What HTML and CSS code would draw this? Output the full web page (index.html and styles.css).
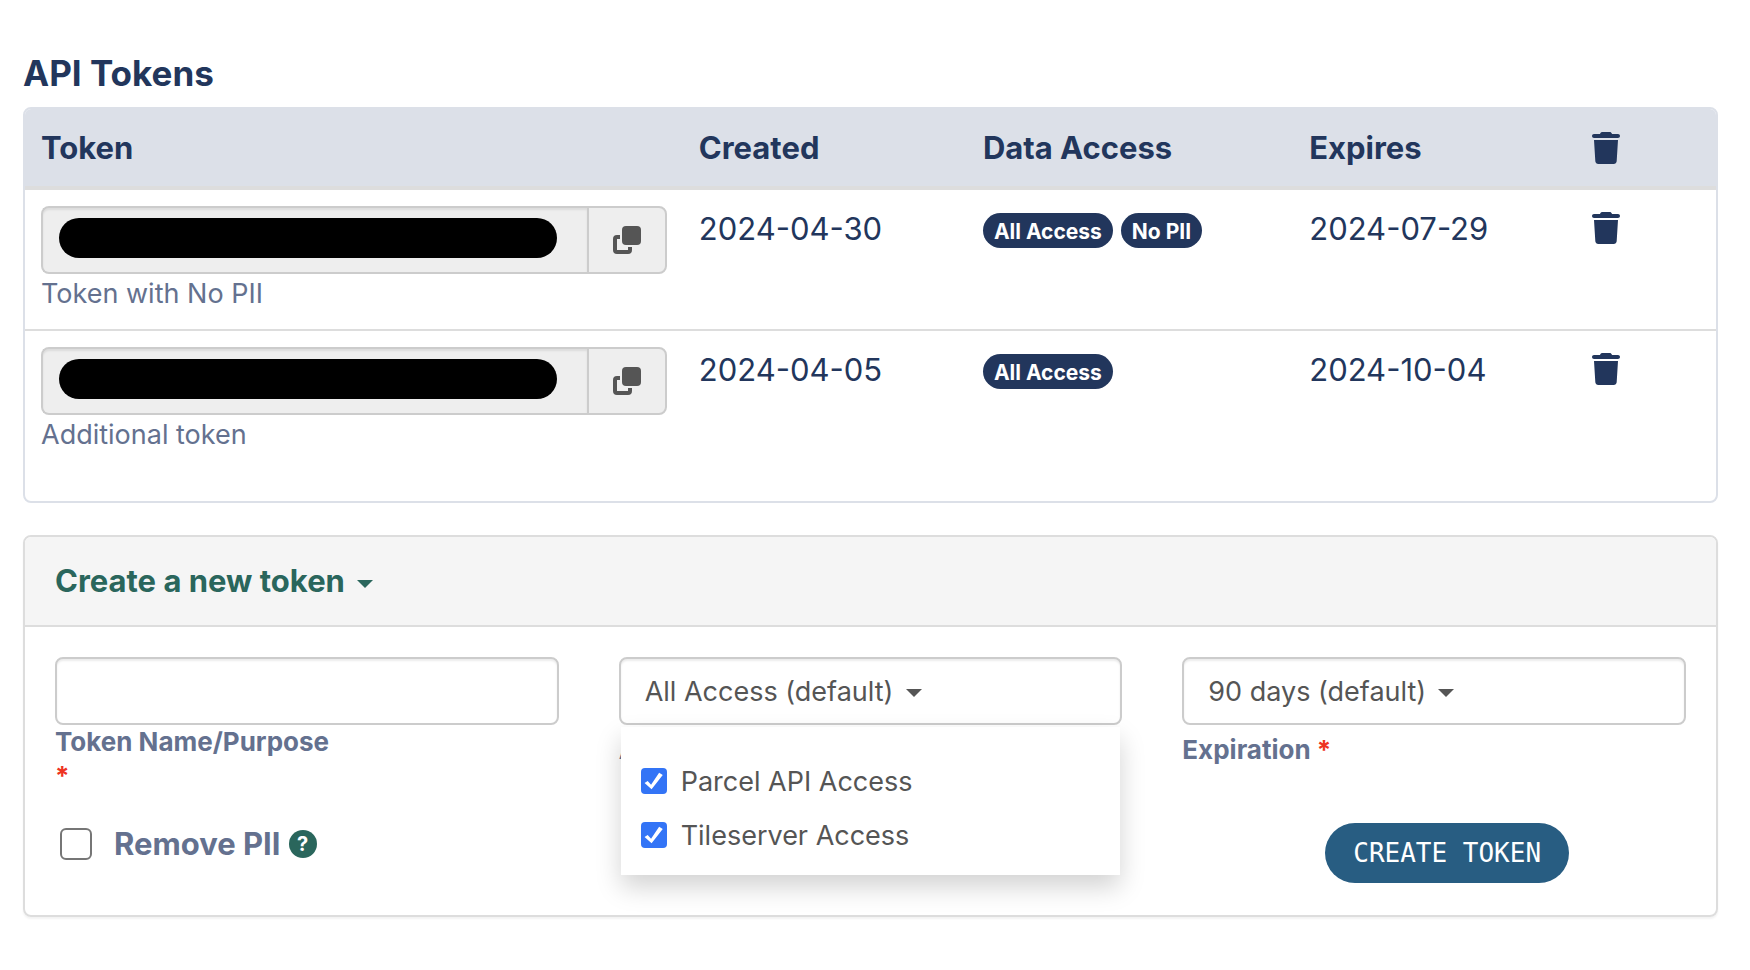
FILE: index.html
```
<!DOCTYPE html>
<html lang="en">
<head>
    <meta charset="UTF-8">
    <meta name="viewport" content="width=device-width, initial-scale=1.0">
    <title>API Tokens</title>
    <link rel="stylesheet" href="styles.css">
</head>
<body>
    <svg class="icon-defs" aria-hidden="true">
        <symbol id="icon-trash" viewBox="0 0 448 512">
            <path d="M135.200 17.700L128 32H32C14.300 32 0 46.300 0 64s14.300 32 32 32h384c17.700 0 32-14.300 32-32s-14.300-32-32-32h-96l-7.200-14.300C307.400 6.800 296.300 0 284.200 0H163.800c-12.100 0-23.200 6.800-28.600 17.700zM416 128H32l21.200 339c1.600 25.300 22.600 45 47.900 45h245.800c25.300 0 46.300-19.700 47.900-45z"/>
        </symbol>
        <symbol id="icon-copy" viewBox="0 0 28 28">
            <rect x="9" y="0" width="19" height="19" rx="4"/>
            <path d="M7 9H4a4 4 0 0 0-4 4v11a4 4 0 0 0 4 4h11a4 4 0 0 0 4-4v-3h-4v3H4V13h3z"/>
        </symbol>
    </svg>

    <h2 class="page-title">API Tokens</h2>

    <div class="token-panel">
        <table class="token-table">
            <thead>
                <tr>
                    <th class="col-token">Token</th>
                    <th class="col-created">Created</th>
                    <th class="col-access">Data Access</th>
                    <th class="col-expires">Expires</th>
                    <th class="col-delete"><svg class="trash" role="img" aria-label="Delete"><use href="#icon-trash"/></svg></th>
                </tr>
            </thead>
            <tbody>
                <tr>
                    <td>
                        <div class="input-group">
                            <input type="text" class="token-input" aria-label="Token with No PII" readonly>
                            <span class="redacted"></span>
                            <button type="button" class="copy-btn" aria-label="Copy token"><svg class="copy"><use href="#icon-copy"/></svg></button>
                        </div>
                        <div class="hint">Token with No PII</div>
                    </td>
                    <td>2024-04-30</td>
                    <td><div class="badges"><span class="badge">All Access</span><span class="badge">No PII</span></div></td>
                    <td>2024-07-29</td>
                    <td><button type="button" class="delete-btn" aria-label="Delete token"><svg class="trash"><use href="#icon-trash"/></svg></button></td>
                </tr>
                <tr>
                    <td>
                        <div class="input-group">
                            <input type="text" class="token-input" aria-label="Additional token" readonly>
                            <span class="redacted"></span>
                            <button type="button" class="copy-btn" aria-label="Copy token"><svg class="copy"><use href="#icon-copy"/></svg></button>
                        </div>
                        <div class="hint">Additional token</div>
                    </td>
                    <td>2024-04-05</td>
                    <td><div class="badges"><span class="badge">All Access</span></div></td>
                    <td>2024-10-04</td>
                    <td><button type="button" class="delete-btn" aria-label="Delete token"><svg class="trash"><use href="#icon-trash"/></svg></button></td>
                </tr>
            </tbody>
        </table>
    </div>

    <div class="panel">
        <div class="panel-heading">
            <a href="#new-token" class="panel-toggle">Create a new token <span class="caret"></span></a>
        </div>
        <form class="panel-body" id="new-token">
            <div class="form-row">
                <div class="form-col">
                    <input type="text" class="control" id="token-name">
                    <label class="field-label" for="token-name">Token Name/Purpose <span class="required required-block">*</span></label>
                </div>
                <div class="form-col dropdown">
                    <button type="button" class="control" id="access" aria-expanded="true">All Access (default) <span class="caret"></span></button>
                    <div class="dropdown-menu">
                        <label class="menu-item"><input type="checkbox" class="check" checked>Parcel API Access</label>
                        <label class="menu-item"><input type="checkbox" class="check" checked>Tileserver Access</label>
                    </div>
                    <label class="field-label label-spaced" for="access">Access</label>
                </div>
                <div class="form-col">
                    <select class="control control-select" id="expiration">
                        <option>90 days (default)</option>
                    </select>
                    <label class="field-label label-spaced" for="expiration">Expiration <span class="required">*</span></label>
                </div>
            </div>
            <div class="form-row">
                <div class="pii">
                    <input type="checkbox" class="pii-check" id="remove-pii">
                    <label for="remove-pii">Remove PII</label>
                    <span class="help">?</span>
                </div>
                <div></div>
                <div class="actions">
                    <button type="submit" class="btn-create">CREATE TOKEN</button>
                </div>
            </div>
        </form>
    </div>
</body>
</html>
```
FILE: styles.css
```
* {
    box-sizing: border-box;
}
body {
    font-family: Inter, "Liberation Sans", sans-serif;
    font-size: 31px;
    line-height: 45px;
    color: #22365c;
    background-color: #fff;
    margin: 0;
    padding: 49px 32px 48px 23px;
}
button, input, select {
    font-family: inherit;
    margin: 0;
}
.icon-defs {
    display: none;
}
.page-title {
    font-size: 35px;
    line-height: 48px;
    margin: 0 0 10px;
}
.token-panel {
    border: 2px solid #dce0e8;
    border-radius: 8px;
    overflow: hidden;
    padding-bottom: 31px;
    margin-bottom: 32px;
}
.token-table {
    width: 100%;
    table-layout: fixed;
    border-collapse: separate;
    border-spacing: 0;
}
.token-table th {
    background-color: #dce0e8;
    border-bottom: 4px solid #ddd;
    padding: 16px;
    text-align: left;
}
.token-table td {
    padding: 16px 16px 15px;
    vertical-align: top;
}
.token-table tr + tr td {
    border-top: 2px solid #ddd;
}
.col-token {
    width: 38.9%;
}
.col-created {
    width: 16.8%;
}
.col-access {
    width: 19.3%;
}
.col-expires {
    width: 16.7%;
}
.col-delete {
    width: 8.3%;
}
.trash {
    display: block;
    width: 28px;
    height: 32px;
    fill: #22365c;
}
.delete-btn {
    background: none;
    border: 0;
    padding: 6px 0;
}
.input-group {
    display: flex;
    position: relative;
}
.token-input {
    flex: 1;
    min-width: 0;
    height: 68px;
    border: 2px solid #ccc;
    border-right: 0;
    border-radius: 8px 0 0 8px;
    background-color: #eee;
    box-shadow: inset 0 2px 2px rgba(0, 0, 0, 0.08);
}
/* covers the token value */
.redacted {
    position: absolute;
    left: 18px;
    right: 110px;
    top: 12px;
    height: 40px;
    border-radius: 20px;
    background-color: #000;
}
.copy-btn {
    display: flex;
    align-items: center;
    justify-content: center;
    width: 80px;
    height: 68px;
    padding: 0;
    border: 2px solid #ccc;
    border-radius: 0 8px 8px 0;
    background-color: #eee;
}
.copy {
    width: 28px;
    height: 28px;
    fill: #555;
}
.hint {
    font-size: 27px;
    line-height: 40px;
    color: #64718f;
}
.badges {
    display: flex;
    gap: 8px;
    padding-top: 7px;
}
.badge {
    background-color: #22365c;
    color: #fff;
    border-radius: 18px;
    padding: 3px 11px 0;
    font-size: 21px;
    font-weight: 700;
    line-height: 32px;
}
.panel {
    border: 2px solid #ddd;
    border-radius: 8px;
    box-shadow: 0 2px 2px rgba(0, 0, 0, 0.05);
}
.panel-heading {
    background-color: #f5f5f5;
    border-bottom: 2px solid #ddd;
    border-radius: 6px 6px 0 0;
    padding: 21px 30px 22px;
}
.panel-toggle {
    color: #2a665c;
    font-weight: 700;
    text-decoration: none;
}
.caret {
    display: inline-block;
    border: 8px solid transparent;
    border-top-color: currentColor;
    border-bottom: 0;
    vertical-align: middle;
    margin-left: 5px;
}
.panel-body {
    padding: 30px 30px 32px;
}
.form-row {
    display: grid;
    grid-template-columns: repeat(3, 1fr);
    column-gap: 60px;
}
.form-row + .form-row {
    margin-top: 30px;
}
.control {
    display: block;
    width: 100%;
    height: 68px;
    border: 2px solid #ccc;
    border-radius: 8px;
    background-color: #fff;
    box-shadow: inset 0 2px 2px rgba(0, 0, 0, 0.08);
    color: #555;
    font-size: 27px;
    padding: 0 24px;
    text-align: left;
}
.control-select {
    appearance: none;
    background-image: url("data:image/svg+xml,%3Csvg xmlns='http://www.w3.org/2000/svg' width='16' height='8'%3E%3Cpath d='M0 0h16l-8 8z' fill='%23555'/%3E%3C/svg%3E");
    background-repeat: no-repeat;
    background-position: 254px 30px;
}
.field-label {
    display: block;
    font-size: 26px;
    font-weight: 700;
    line-height: 34px;
    color: #64718f;
}
.label-spaced {
    margin-top: 8px;
}
.required {
    color: #ee3322;
}
.required-block {
    display: block;
}
.dropdown {
    position: relative;
}
.dropdown-menu {
    position: absolute;
    top: 70px;
    left: 2px;
    right: 2px;
    padding: 27px 20px 13px;
    background-color: #fff;
    box-shadow: 0 12px 24px rgba(0, 0, 0, 0.175);
}
.menu-item {
    display: flex;
    align-items: center;
    gap: 14px;
    height: 54px;
    font-size: 27px;
    color: #555;
}
.check {
    appearance: none;
    width: 26px;
    height: 26px;
    border-radius: 4px;
    background-color: #3374f6;
}
.check::before {
    content: "";
    display: block;
    width: 26px;
    height: 26px;
    background-color: #fff;
    clip-path: polygon(15% 58%, 27% 50%, 40% 64%, 71% 18%, 85% 27%, 42% 82%);
}
.pii {
    display: flex;
    align-items: center;
    align-self: start;
    padding-left: 5px;
    color: #64718f;
    font-size: 31px;
    font-weight: 700;
    line-height: 42px;
}
.pii-check {
    appearance: none;
    width: 32px;
    height: 32px;
    border: 2px solid #767676;
    border-radius: 6px;
    margin-right: 22px;
}
.help {
    width: 28px;
    height: 28px;
    margin-left: 8px;
    border-radius: 50%;
    background-color: #2a665c;
    color: #fff;
    font-size: 20px;
    line-height: 28px;
    text-align: center;
}
.actions {
    padding-left: 26px;
    text-align: center;
}
.btn-create {
    display: inline-block;
    vertical-align: top;
    height: 60px;
    border: 0;
    border-radius: 30px;
    padding: 0 28px;
    background-color: #285d82;
    color: #fff;
    font-family: "DejaVu Sans Mono", monospace;
    font-size: 26px;
}
```
